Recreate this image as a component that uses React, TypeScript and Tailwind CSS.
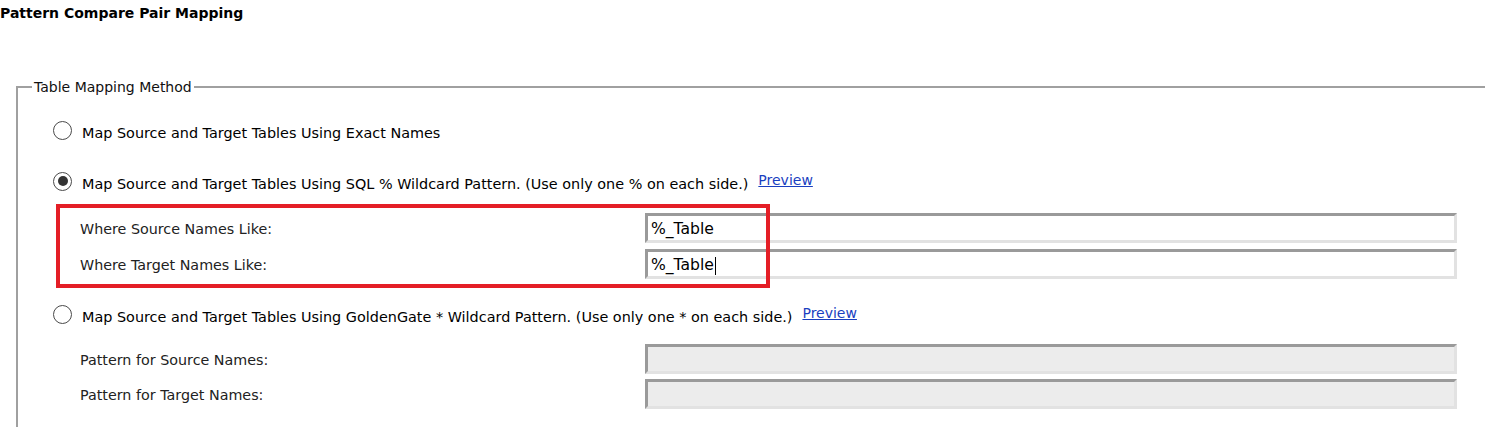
import React from 'react';

const font = { fontFamily: '"DejaVu Sans", Verdana, sans-serif' };

const Radio: React.FC<{ checked?: boolean }> = ({ checked }) => (
  <span className="flex h-[19px] w-[19px] shrink-0 items-center justify-center rounded-full border border-[#4a4a4a] bg-white">
    {checked && <span className="h-[10px] w-[10px] rounded-full bg-[#333]" />}
  </span>
);

const Field: React.FC<{ label: string; value?: string; disabled?: boolean; caret?: boolean }> = ({
  label,
  value,
  disabled,
  caret,
}) => (
  <div className="flex h-[30px] items-center">
    <div className="w-[627px] pl-[62px] pt-[4px] text-[14.3px] text-[#222]">{label}</div>
    <div
      className={
        'flex h-[30px] w-[812px] items-center border-[3px] border-t-[#9a9a9a] border-l-[#9a9a9a] border-r-[#e2e2e2] border-b-[#e2e2e2] pl-[3px] pt-[4px] text-[15.6px] text-black ' +
        (disabled ? 'bg-[#ececec]' : 'bg-white')
      }
    >
      {value}
      {caret && <span className="ml-[1px] h-[18px] w-[1px] bg-black" />}
    </div>
  </div>
);

const Option: React.FC<{ text: string; checked?: boolean; preview?: boolean }> = ({ text, checked, preview }) => (
  <div className="flex h-[24px] items-center pl-[35px]">
    <Radio checked={checked} />
    <span className="ml-[10px] mt-[7px] text-[14.4px] text-black">{text}</span>
    {preview && (
      <a href="#" className="ml-[10px] -mt-[2px] text-[14px] text-[#1a3fbf] underline">
        Preview
      </a>
    )}
  </div>
);

export default function App() {
  return (
    <div className="h-[427px] w-[1485px] overflow-hidden bg-white" style={font}>
      <h1 className="pt-[4px] text-[14px] font-bold leading-[18px] text-black">Pattern Compare Pair Mapping</h1>

      <fieldset className="relative ml-[16px] mt-[56px] w-[1500px] border-2 border-[#a0a0a0] pb-[40px]">
        <legend className="ml-[14px] px-[2px] text-[14px] leading-[18px] text-[#111]">Table Mapping Method</legend>

        <div className="mt-[22px]">
          <Option text="Map Source and Target Tables Using Exact Names" />
        </div>
        <div className="mt-[27px]">
          <Option
            checked
            preview
            text="Map Source and Target Tables Using SQL % Wildcard Pattern. (Use only one % on each side.)"
          />
        </div>
        <div className="mt-[20px] flex flex-col gap-[6px]">
          <Field label="Where Source Names Like:" value="%_Table" />
          <Field label="Where Target Names Like:" value="%_Table" caret />
        </div>
        <div className="mt-[23px]">
          <Option
            preview
            text="Map Source and Target Tables Using GoldenGate * Wildcard Pattern. (Use only one * on each side.)"
          />
        </div>
        <div className="mt-[18px] flex flex-col gap-[5px]">
          <Field label="Pattern for Source Names:" disabled />
          <Field label="Pattern for Target Names:" disabled />
        </div>

        {/* red highlight around the SQL pattern fields */}
        <div className="pointer-events-none absolute left-[38px] top-[108px] h-[84px] w-[714px] border-[4px] border-[#e41e26]" />
      </fieldset>
    </div>
  );
}
